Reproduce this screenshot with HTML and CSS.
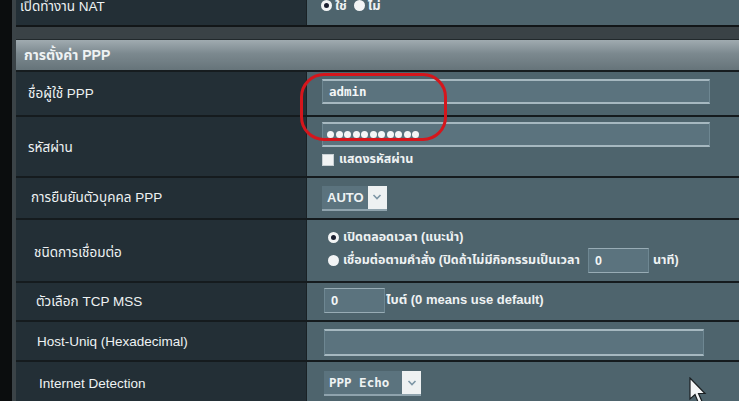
FILE: index.html
```html
<!DOCTYPE html>
<html lang="th">
<head>
<meta charset="utf-8">
<title>PPP</title>
<link rel="stylesheet" href="styles.css">
</head>
<body>
<div class="page">
  <div class="table">
    <div class="row row-nat">
      <div class="label">เปิดทำงาน NAT</div>
      <div class="value">
        <span class="radio on"></span><span class="opt">ใช่</span>
        <span class="radio"></span><span class="opt">ไม่</span>
      </div>
    </div>
  </div>
  <div class="gap"></div>
  <div class="table">
    <div class="header">การตั้งค่า PPP</div>
    <div class="row row-user">
      <div class="label">ชื่อผู้ใช้ PPP</div>
      <div class="value"><div class="input wide mono">admin</div></div>
    </div>
    <div class="row row-pass">
      <div class="label">รหัสผ่าน</div>
      <div class="value col">
        <div class="input wide pw"><span class="dot"></span><span class="dot"></span><span class="dot"></span><span class="dot"></span><span class="dot"></span><span class="dot"></span><span class="dot"></span><span class="dot"></span><span class="dot"></span><span class="dot"></span><span class="dot"></span></div>
        <div class="check-line"><span class="checkbox"></span><span>แสดงรหัสผ่าน</span></div>
      </div>
    </div>
    <div class="row row-auth">
      <div class="label">การยืนยันตัวบุคคล PPP</div>
      <div class="value"><div class="select"><span class="sel-text bold">AUTO</span><span class="sel-arrow"><svg width="10" height="8" viewBox="0 0 10 8"><path d="M1.5 2 L5 5.5 L8.5 2" fill="none" stroke="#7d96a6" stroke-width="1.6"/></svg></span></div></div>
    </div>
    <div class="row row-conn">
      <div class="label">ชนิดการเชื่อมต่อ</div>
      <div class="value col">
        <div class="radio-line"><span class="radio on"></span><span>เปิดตลอดเวลา (แนะนำ)</span></div>
        <div class="radio-line"><span class="radio"></span><span>เชื่อมต่อตามคำสั่ง (ปิดถ้าไม่มีกิจกรรมเป็นเวลา</span><span class="input small bold">0</span><span>นาที)</span></div>
      </div>
    </div>
    <div class="row row-mss">
      <div class="label">ตัวเลือก TCP MSS</div>
      <div class="value"><span class="input small bold">0</span><span class="after">ไบต์ (0 means use default)</span></div>
    </div>
    <div class="row row-host">
      <div class="label">Host-Uniq (Hexadecimal)</div>
      <div class="value"><div class="input host"></div></div>
    </div>
    <div class="row row-det">
      <div class="label">Internet Detection</div>
      <div class="value"><div class="select"><span class="sel-text mono">PPP Echo</span><span class="sel-arrow"><svg width="10" height="8" viewBox="0 0 10 8"><path d="M1.5 2 L5 5.5 L8.5 2" fill="none" stroke="#7d96a6" stroke-width="1.6"/></svg></span></div></div>
    </div>
  </div>
</div>
<div class="ring"></div>
<svg class="cursor" width="20" height="28" viewBox="0 0 20 28"><path d="M1 1 L1 22 L6 17.5 L9.5 26 L13 24.5 L9.5 16.5 L16 16.5 Z" fill="#f4f6f7" stroke="#1a1f22" stroke-width="1.2"/></svg>
</body>
</html>
```
FILE: styles.css
```css
html, body {
  margin: 0;
  padding: 0;
  background: #0b0d0e;
  width: 739px;
  height: 401px;
  overflow: hidden;
  font-family: "Liberation Sans", Arial, "Noto Sans Thai", "Tahoma", sans-serif;
  font-size: 13px;
  color: #eef2f3;
}
.page {
  margin-left: 12px;
  margin-top: -14px;
  border-left: 4px solid #3b4347;
}
.table {
  background: #4e646d;
}
.row {
  display: flex;
  box-sizing: border-box;
  border-bottom: 2px solid #151b1e;
}
.label {
  box-sizing: border-box;
  width: 291px;
  flex: none;
  background: #232f36;
  display: flex;
  align-items: center;
  padding-left: 16px;
  border-right: 1px solid #1a2226;
  font-size: 13.5px;
}
.value {
  flex: 1;
  display: flex;
  align-items: center;
  padding-left: 15px;
  background: #4e646d;
}
.value.col {
  flex-direction: column;
  align-items: flex-start;
  justify-content: center;
}
.row-nat { height: 41px; border-bottom: 2px solid #121618; }
.row-nat .label { padding-left: 4px; padding-top: 2px; }
.row-nat .value { padding-left: 14px; gap: 3px; }
.opt { margin-right: 4px; font-weight: bold; }
.gap {
  box-sizing: border-box;
  height: 13px;
  background: #3a4246;
  border-bottom: 1px solid #22292c;
}
.header {
  box-sizing: border-box;
  height: 32px;
  display: flex;
  align-items: center;
  padding-left: 8px;
  font-weight: bold;
  font-size: 14px;
  background: linear-gradient(#a0abb0, #7c898f 45%, #66747a);
  border-bottom: 2px solid #161c1f;
}
.row-user { height: 45px; }
.row-pass { height: 61px; }
.row-auth { height: 42px; }
.row-conn { height: 63px; }
.row-mss { height: 39px; }
.row-host { height: 40px; }
.row-det { height: 45px; }
.row-user .label { padding-left: 12px; }
.row-user .value { padding-bottom: 4px; }
.row-pass .label { padding-left: 12px; padding-top: 2px; }
.row-pass .value { justify-content: flex-start; padding-top: 5px; }
.row-auth .label { padding-left: 15px; }
.row-conn .label { padding-left: 18px; padding-top: 4px; }
.row-mss .label { padding-left: 20px; }
.row-host .label { padding-left: 21px; }
.row-det .label { padding-left: 23px; }

.input {
  box-sizing: border-box;
  height: 25px;
  background: #5b737e;
  border-top: 2px solid #a6b8c0;
  border-bottom: 2px solid #a6b8c0;
  border-left: 1px solid #6e8792;
  border-right: 1px solid #6e8792;
  display: flex;
  align-items: center;
  padding-left: 6px;
  color: #f3f6f7;
}
.input.wide { width: 388px; }
.mono {
  font-family: "DejaVu Sans Mono", "Liberation Mono", monospace;
  font-size: 12.5px;
  font-weight: bold;
}
.pw { gap: 1.5px; padding-left: 4px; }
.dot {
  width: 7px;
  height: 7px;
  border-radius: 50%;
  background: #f4f6f7;
}
.check-line {
  display: flex;
  align-items: center;
  gap: 5px;
  margin-top: 3px;
  font-weight: bold;
  font-size: 12.5px;
}
.checkbox {
  width: 12px;
  height: 12px;
  background: #f1f3f4;
  border: 1px solid #c8d0d4;
  box-sizing: border-box;
}
.select {
  display: flex;
  height: 25px;
  border-bottom: 2px solid #8fa3ad;
  box-sizing: border-box;
}
.sel-text {
  background: #5b737e;
  display: flex;
  align-items: center;
  padding: 0 4px 0 5px;
}
.bold { font-weight: bold; }
.sel-arrow {
  width: 19px;
  background: #eef1f2;
  display: flex;
  align-items: center;
  justify-content: center;
}
.radio {
  display: inline-block;
  width: 11px;
  height: 11px;
  border-radius: 50%;
  background: #f2f4f5;
  box-sizing: border-box;
  flex: none;
}
.radio.on {
  border: 3px solid #f2f4f5;
  background: #1a1f30;
}
.radio-line {
  display: flex;
  align-items: center;
  gap: 4px;
  font-size: 12.5px;
  font-weight: bold;
  height: 23px;
}
.row-conn .value { padding-left: 21px; padding-bottom: 3px; }
.input.small {
  width: 61px;
  margin-left: 4px;
  border-top: 1px solid #98acb5;
  border-bottom: 1px solid #98acb5;
}
.row-mss .value { padding-left: 17px; padding-bottom: 3px; }
.row-mss .input.small { margin-left: 0; }
.after { font-weight: bold; margin-left: 1px; }
.input.host { width: 380px; height: 27px; }
.row-host .value { padding-left: 17px; padding-top: 3px; }
.row-det .value { padding-left: 17px; }
.row-det .sel-text { width: 78px; box-sizing: border-box; padding-left: 5px; }

.ring {
  position: absolute;
  left: 300px;
  top: 73px;
  width: 141px;
  height: 62px;
  border: 3px solid #d5161c;
  border-radius: 24px;
}
.cursor {
  position: absolute;
  left: 689px;
  top: 377px;
}
```
